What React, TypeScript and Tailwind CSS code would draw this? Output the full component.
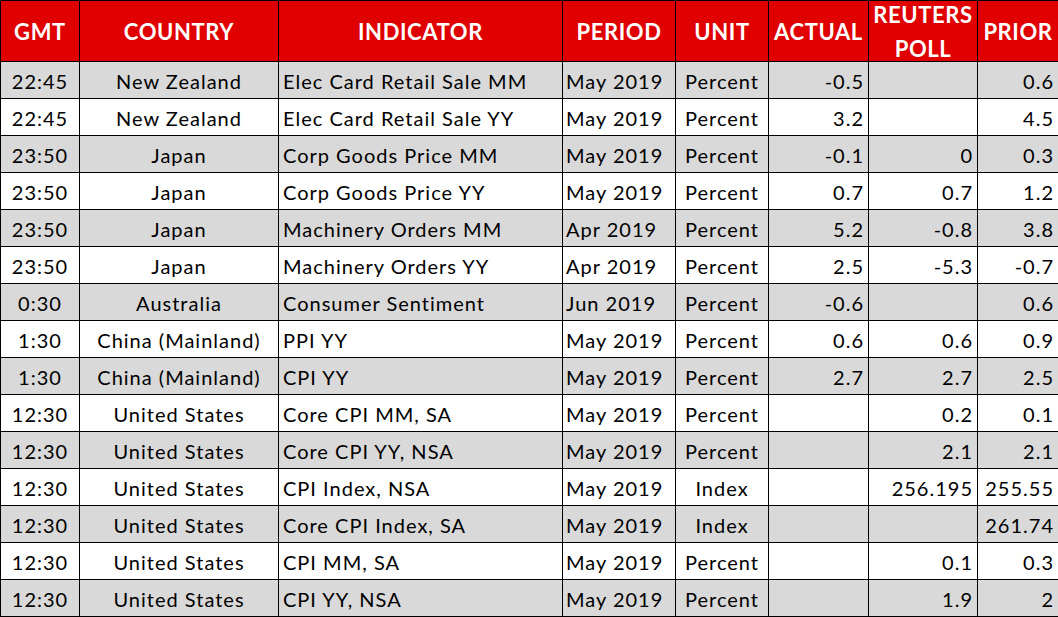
const rows: string[][] = [
  ["22:45", "New Zealand", "Elec Card Retail Sale MM", "May 2019", "Percent", "-0.5", "", "0.6"],
  ["22:45", "New Zealand", "Elec Card Retail Sale YY", "May 2019", "Percent", "3.2", "", "4.5"],
  ["23:50", "Japan", "Corp Goods Price MM", "May 2019", "Percent", "-0.1", "0", "0.3"],
  ["23:50", "Japan", "Corp Goods Price YY", "May 2019", "Percent", "0.7", "0.7", "1.2"],
  ["23:50", "Japan", "Machinery Orders MM", "Apr 2019", "Percent", "5.2", "-0.8", "3.8"],
  ["23:50", "Japan", "Machinery Orders YY", "Apr 2019", "Percent", "2.5", "-5.3", "-0.7"],
  ["0:30", "Australia", "Consumer Sentiment", "Jun 2019", "Percent", "-0.6", "", "0.6"],
  ["1:30", "China (Mainland)", "PPI YY", "May 2019", "Percent", "0.6", "0.6", "0.9"],
  ["1:30", "China (Mainland)", "CPI YY", "May 2019", "Percent", "2.7", "2.7", "2.5"],
  ["12:30", "United States", "Core CPI MM, SA", "May 2019", "Percent", "", "0.2", "0.1"],
  ["12:30", "United States", "Core CPI YY, NSA", "May 2019", "Percent", "", "2.1", "2.1"],
  ["12:30", "United States", "CPI Index, NSA", "May 2019", "Index", "", "256.195", "255.55"],
  ["12:30", "United States", "Core CPI Index, SA", "May 2019", "Index", "", "", "261.74"],
  ["12:30", "United States", "CPI MM, SA", "May 2019", "Percent", "", "0.1", "0.3"],
  ["12:30", "United States", "CPI YY, NSA", "May 2019", "Percent", "", "1.9", "2"],
];

const heads = ["GMT", "COUNTRY", "INDICATOR", "PERIOD", "UNIT", "ACTUAL", "REUTERS POLL", "PRIOR"];

const align = [
  "text-center",
  "text-center",
  "text-left pl-[4px]",
  "text-left pl-[3px]",
  "text-center",
  "text-right pr-[4px]",
  "text-right pr-[4px]",
  "text-right pr-[4px]",
];

export default function App() {
  return (
    <div className="w-[1058px] h-[617px] bg-white overflow-hidden" style={{ fontFamily: "Lato, 'Open Sans', sans-serif" }}>
      <table className="table-fixed border-collapse w-[1058px]">
        <colgroup>
          <col className="w-[79px]" />
          <col className="w-[199px]" />
          <col className="w-[284px]" />
          <col className="w-[113px]" />
          <col className="w-[93px]" />
          <col className="w-[100px]" />
          <col className="w-[109px]" />
          <col className="w-[81px]" />
        </colgroup>
        <thead>
          <tr className="h-[61px] bg-[#e00000] text-white font-bold text-[22px] tracking-[0.6px]">
            {heads.map((h) => (
              <th key={h} className="border border-black p-0 text-center">
                <div className="h-[60px] flex flex-col justify-center leading-[34px] translate-y-[1px]">
                  {h.split(" ").map((w) => (
                    <div key={w} className="h-[34px] shrink-0">{w}</div>
                  ))}
                </div>
              </th>
            ))}
          </tr>
        </thead>
        <tbody>
          {rows.map((r, i) => (
            <tr key={i} className={`h-[37px] text-[20px] tracking-[1px] text-black ${i % 2 === 0 ? "bg-[#d9d9d9]" : "bg-white"}`}>
              {r.map((c, j) => (
                <td key={j} className={`border border-black p-0 whitespace-nowrap overflow-hidden ${align[j]}`}>
                  <div className="h-[36px] leading-[36px] translate-y-[1px]">{c}</div>
                </td>
              ))}
            </tr>
          ))}
        </tbody>
      </table>
    </div>
  );
}
